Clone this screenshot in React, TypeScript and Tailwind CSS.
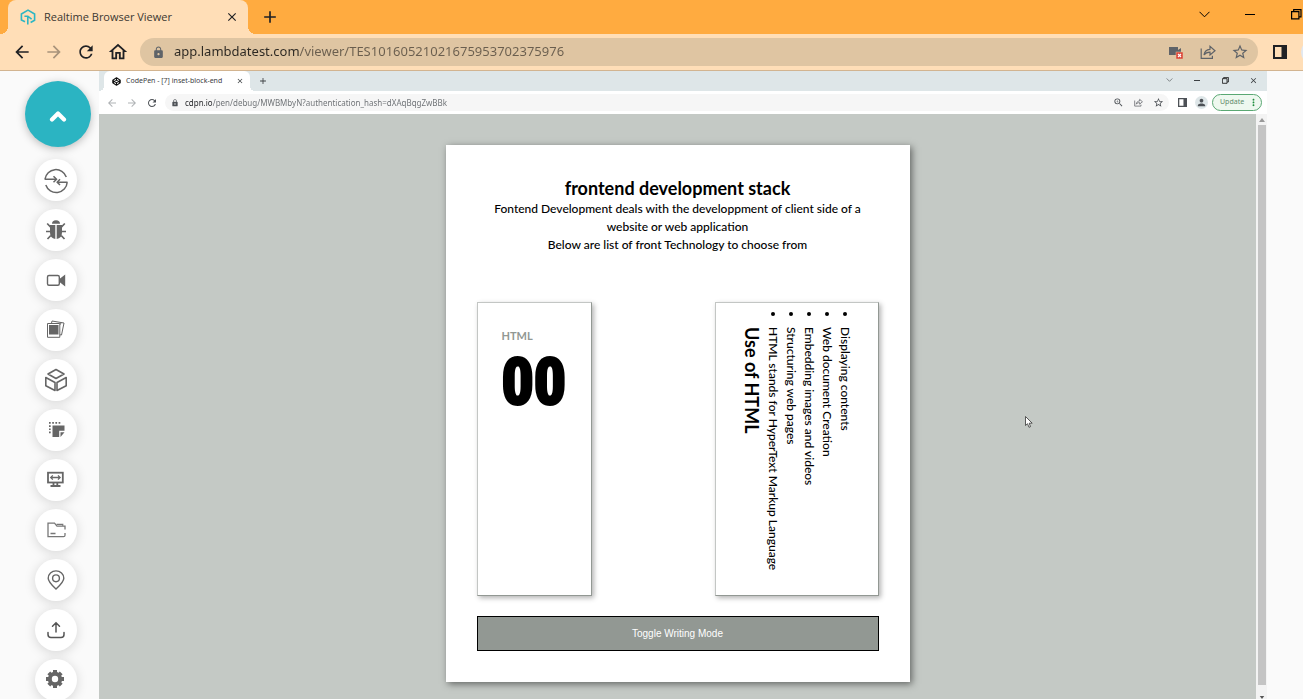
import type { ReactNode } from "react";
import {
  MdArrowBack,
  MdArrowForward,
  MdRefresh,
  MdOutlineHome,
  MdLock,
  MdStarBorder,
  MdZoomIn,
  MdPerson,
  MdMoreVert,
  MdClose,
  MdAdd,
} from "react-icons/md";

function LambdaLogo() {
  return (
    <svg viewBox="0 0 16 16" className="size-4 shrink-0" fill="none" stroke="#2db6c4" strokeWidth="1.6">
      <path d="M5 12.8 1.4 11V5L8 1.1 14.6 5v6.2L10.6 13.5" />
      <path d="M4.4 7.2h3.4l3.8 3M7.8 7.4v8" />
    </svg>
  );
}

function CodePenLogo() {
  return (
    <svg viewBox="0 0 24 24" className="size-[9px] shrink-0" fill="none" stroke="#111" strokeWidth="2.8" strokeLinejoin="round">
      <path d="M12 2 22 8.5v7L12 22 2 15.5v-7zM12 22v-6.5M22 8.5l-10 7-10-7M2 15.5l10-7 10 7M12 2v6.5" />
    </svg>
  );
}

function ShareIcon({ className }: { className: string }) {
  return (
    <svg viewBox="0 0 16 16" className={className} fill="none" stroke="currentColor" strokeWidth="1.2">
      <path d="M1.2 4.5v9.9h11.2v-2.6" />
      <path d="M4 11c.4-3.6 2.600-5.500 6-5.700V2.400L15 6.700l-5 4.200V8.200C7.400 8.200 5.400 9 4 11z" />
    </svg>
  );
}

function PanelIcon({ className }: { className: string }) {
  return (
    <svg viewBox="0 0 14 14" className={className}>
      <path fill="currentColor" fillRule="evenodd" d="M0 0h14v14H0zM2 2v10h6.500V2z" />
    </svg>
  );
}

function CameraBlockedIcon() {
  return (
    <svg viewBox="0 0 16 14" className="h-[14px] w-4">
      <path d="M1 2h9v3l3-2v7H1z" fill="#5f6368" />
      <rect x="8" y="7" width="7" height="7" fill="#db4437" stroke="#dfc5a2" strokeWidth=".5" />
      <path d="m10 9 3 3m0-3-3 3" stroke="#fff" strokeWidth="1.200" />
    </svg>
  );
}

function ChevronDown({ className }: { className: string }) {
  return (
    <svg viewBox="0 0 11 7" className={className} fill="none" stroke="currentColor">
      <path d="m.5.8 5 5 5-5" />
    </svg>
  );
}

function RestoreIcon({ className }: { className: string }) {
  return (
    <svg viewBox="0 0 11 11" className={className} fill="none" stroke="currentColor" strokeWidth="1.200">
      <path d="M.6 2.600h7.300v7.300H.6zM2.700 2.400V.6h7.300v7.300H8.200" />
    </svg>
  );
}

const tools: { label: string; icon: ReactNode }[] = [
  {
    label: "Switch",
    icon: (
      <g fill="none" stroke="#666" strokeWidth="1.5">
        <path d="M1 11.200A11 11 0 0 1 22.300 9M.5 11.200h11.500M23.500 14.200H13.500M23.200 14.200A11 11 0 0 1 1.800 17" />
        <path d="m9.500 8.200 3 3-3 3M16 11.300l-2.800 2.900 2.800 2.800" />
      </g>
    ),
  },
  {
    label: "Mark as bug",
    icon: (
      <g fill="#666" stroke="#666">
        <path d="M8 5.800a4 3.600 0 0 1 8 0z" stroke="none" />
        <path d="M6 7h5.300v14C7.800 20.500 6 18 6 14.500zM12.700 7H18v7.500c0 3.500-1.800 6-5.300 6.500z" stroke="none" />
        <path d="M6.500 9 3.200 5.500M17.500 9l3.300-3.500M6 13.500H2M18 13.500h4M6.800 17.500 3.500 21M17.200 17.500l3.300 3.500" strokeWidth="1.700" fill="none" />
      </g>
    ),
  },
  {
    label: "Record video",
    icon: (
      <g stroke="#666" strokeWidth="1.400">
        <rect x="3.500" y="7.500" width="11.800" height="9.800" rx="1.500" fill="none" />
        <path d="M16.500 11 20.500 8v9l-4-3z" fill="#666" />
      </g>
    ),
  },
  {
    label: "Gallery",
    icon: (
      <g stroke="#666" fill="none">
        <path d="M3.500 5.500h12.300v13.800H3.500z" />
        <rect x="5.500" y="7.500" width="8.500" height="8.500" fill="#666" />
        <path d="M7.500 5.200 8 3l12 2-2.500 12-1.500-.2M17 4.500l-.5 2" />
      </g>
    ),
  },
  {
    label: "Project",
    icon: (
      <g stroke="#666" strokeWidth="1.600" fill="none" strokeLinejoin="round">
        <path d="M12 1.500 20 6l-8 4.500L4 6z" />
        <path d="M1.800 9.500 11 14.500v8l-9.200-4.800zM22.200 9.500 13 14.500v8l9.200-4.800z" />
      </g>
    ),
  },
  {
    label: "Snapshot",
    icon: (
      <g fill="#666">
        <path d="M5 4h1.700v1.700H5zM8.200 4h1.700v1.700H8.200zM11.400 4h1.700v1.700h-1.700zM14.600 4h1.700v1.700h-1.700zM5 7.200h1.700v1.700H5zM5 10.400h1.700v1.700H5zM5 13.600h1.700v1.700H5z" />
        <path d="M8.500 7.500h12v5.300h-5.300V19H8.500zM16.500 14.200h4L16.500 19z" />
      </g>
    ),
  },
  {
    label: "Resolution",
    icon: (
      <g stroke="#666" fill="none">
        <rect x="4" y="4.700" width="14.800" height="9.800" strokeWidth="1.800" />
        <path d="M6.800 9.500H16M8.800 7.400 6.700 9.500l2.100 2.100M14 7.400l2.100 2.100-2.100 2.100" strokeWidth="1.300" />
        <path d="M9.500 15v2M13.300 15v2M6.500 18h10" strokeWidth="1.800" />
      </g>
    ),
  },
  {
    label: "Files",
    icon: (
      <g stroke="#777" strokeWidth="1.300" fill="none">
        <path d="M21 11.500V8.200H13L10.500 5.200H4v13.500h15.500a1.500 1.500 0 0 0 1.500-1.500V15" />
        <path d="M12.500 6.300h6.200v1.500M6.500 15.500h5" />
      </g>
    ),
  },
  {
    label: "Location",
    icon: (
      <g stroke="#666" strokeWidth="1.400" fill="none">
        <path d="M12 21C7.500 16.800 4.200 13.800 4.200 10.200a7.800 7.300 0 0 1 15.600 0C19.800 13.800 16.500 16.800 12 21z" />
        <circle cx="12" cy="10.300" r="3.400" />
      </g>
    ),
  },
  {
    label: "Upload",
    icon: (
      <g stroke="#555" strokeWidth="1.500" fill="none" strokeLinecap="round">
        <path d="M12 14V5M8.500 8.200 12 4.700l3.500 3.500M4 14.500v2a3 3 0 0 0 3 3h10a3 3 0 0 0 3-3v-2" />
      </g>
    ),
  },
  {
    label: "Settings",
    icon: (
      <g fill="none" stroke="#666">
        <circle cx="11" cy="11" r="5.200" strokeWidth="4" />
        <path d="M11 2v3M11 17v3M2 11h3M17 11h3M4.800 4.800l2 2M15.200 15.200l2 2M17.200 4.800l-2 2M6.800 15.200l-2 2" strokeWidth="4" />
      </g>
    ),
  },
];

const uses = [
  "HTML stands for HyperText Markup Language",
  "Structuring web pages",
  "Embedding images and videos",
  "Web document Creation",
  "Displaying contents",
];

function OuterChrome() {
  return (
    <header className="shrink-0 overflow-hidden font-['Noto_Sans',sans-serif]">
      <div className="flex h-[34px] items-center bg-[#ffab40] text-[#202124]">
        <span className="size-2 self-end bg-[radial-gradient(circle_at_top_left,transparent_8px,#ffdeb7_8px)]" />
        <div className="flex h-full w-60 items-center gap-2 rounded-t-lg bg-[#ffdeb7] px-3">
          <LambdaLogo />
          <span className="flex-1 whitespace-nowrap font-['Open_Sans',sans-serif] text-[11px] text-[#3c3832]">Realtime Browser Viewer</span>
          <button aria-label="Close tab" className="-mr-[3px]"><MdClose className="size-[14px]" /></button>
        </div>
        <span className="size-2 self-end bg-[radial-gradient(circle_at_top_right,transparent_8px,#ffdeb7_8px)]" />
        <button aria-label="New tab" className="ml-1"><MdAdd className="size-5" /></button>
        <div className="-mr-4 ml-auto flex h-full items-center pb-[6px] text-black">
          <button aria-label="Search tabs" className="flex w-[46px] justify-center"><ChevronDown className="h-[7px] w-[11px]" /></button>
          <button aria-label="Minimize" className="flex w-[46px] justify-center"><span className="h-px w-[10px] bg-black" /></button>
          <button aria-label="Restore" className="flex w-[46px] justify-center"><RestoreIcon className="size-[11px]" /></button>
        </div>
      </div>
      <div className="flex h-[37px] items-center border-b border-[#d2b490] bg-[#ffdeb7] pl-[6px] text-[#202124]">
        <button aria-label="Back" className="flex w-8 justify-center"><MdArrowBack className="size-5" /></button>
        <button aria-label="Forward" className="flex w-8 justify-center text-[#a8937b]"><MdArrowForward className="size-5" /></button>
        <button aria-label="Reload" className="flex w-8 justify-center"><MdRefresh className="size-5" /></button>
        <button aria-label="Home" className="flex w-8 justify-center"><MdOutlineHome className="size-[22px]" /></button>
        <div className="ml-[6px] flex h-7 flex-1 items-center rounded-full bg-[#dfc5a2] pr-[10px] pl-3 text-[#5f6368]">
          <MdLock className="size-[13px] shrink-0" />
          <input
            aria-label="Address"
            defaultValue="app.lambdatest.com/viewer/TES10160521021675953702375976"
            className="ml-[9px] min-w-0 flex-1 bg-[linear-gradient(to_right,#2c2822_125px,#6a5e4e_125px)] bg-clip-text text-[13px] text-transparent outline-none"
          />
          <button aria-label="Camera blocked" className="flex w-8 justify-center"><CameraBlockedIcon /></button>
          <button aria-label="Share" className="flex w-8 justify-center"><ShareIcon className="size-4" /></button>
          <button aria-label="Bookmark" className="-mr-2 flex w-8 justify-center"><MdStarBorder className="size-[18px]" /></button>
        </div>
        <button aria-label="Side panel" className="mr-[14px] ml-[15px]"><PanelIcon className="size-[14px]" /></button>
        <span className="-mr-[22px] size-6 rounded-full bg-slate-200" />
      </div>
    </header>
  );
}

function Toolbox() {
  return (
    <nav aria-label="Session tools" className="flex w-[99px] shrink-0 flex-col gap-2 bg-[#fafafa] pt-[10px] pl-[35px]">
      <button aria-label="Collapse" className="mb-1 -ml-[10px] flex size-[66px] shrink-0 items-center justify-center rounded-full bg-[#2bb4c2] shadow-[0_2px_8px_rgba(0,0,0,0.25)]">
        <svg viewBox="0 0 18 12" className="mt-1 h-3 w-[18px]" fill="none" stroke="#fff" strokeWidth="4.200" strokeLinecap="round" strokeLinejoin="round">
          <path d="M3 9.500 9 3.500l6 6" />
        </svg>
      </button>
      {tools.map((t) => (
        <button key={t.label} aria-label={t.label} className="flex size-[42px] shrink-0 items-center justify-center rounded-full bg-white shadow-[0_2px_12px_rgba(0,0,0,0.15)]">
          <svg viewBox="0 0 24 24" className="size-6 overflow-visible">{t.icon}</svg>
        </button>
      ))}
    </nav>
  );
}

function InnerChrome() {
  return (
    <div className="shrink-0 font-['Noto_Sans',sans-serif] text-[#3c4043]">
      <div className="flex h-5 items-center bg-[#dee6e8]">
        <span className="size-[5px] self-end bg-[radial-gradient(circle_at_top_left,transparent_5px,#fff_5px)]" />
        <div className="flex h-full w-[146px] items-center gap-[5px] rounded-t-md bg-white pr-[6px] pl-2">
          <CodePenLogo />
          <span className="flex-1 whitespace-nowrap text-[7px]">CodePen - [7] inset-block-end</span>
          <button aria-label="Close CodePen tab"><MdClose className="size-2" /></button>
        </div>
        <span className="size-[5px] self-end bg-[radial-gradient(circle_at_top_right,transparent_5px,#fff_5px)]" />
        <button aria-label="New CodePen tab" className="ml-[3px]"><MdAdd className="size-[10px]" /></button>
        <div className="ml-auto flex items-center pb-[2px]">
          <button aria-label="Search inner tabs" className="flex w-7 justify-center"><ChevronDown className="h-1 w-[7px]" /></button>
          <button aria-label="Minimize inner window" className="flex w-7 justify-center"><span className="h-px w-[6px] bg-current" /></button>
          <button aria-label="Restore inner window" className="flex w-7 justify-center text-black"><RestoreIcon className="size-[7px]" /></button>
          <button aria-label="Close inner window" className="flex w-7 justify-center"><MdClose className="size-[9px]" /></button>
        </div>
      </div>
      <div className="flex h-[23px] items-center bg-white pr-[5px] pl-[3px] text-[#4d5156]">
        <button aria-label="Inner back" className="flex w-5 justify-center text-[#b0b3b6]"><MdArrowBack className="size-3" /></button>
        <button aria-label="Inner forward" className="flex w-5 justify-center text-[#b0b3b6]"><MdArrowForward className="size-3" /></button>
        <button aria-label="Inner reload" className="flex w-5 justify-center"><MdRefresh className="size-3" /></button>
        <div className="ml-[3px] flex h-[17px] flex-1 items-center rounded-full bg-[#f6f6f6] pr-[1px] pl-[6px]">
          <MdLock className="size-2 shrink-0" />
          <input
            aria-label="Inner address"
            defaultValue="cdpn.io/pen/debug/MWBMbyN?authentication_hash=dXAqBqgZwBBk"
            className="ml-[6px] min-w-0 flex-1 bg-[linear-gradient(to_right,#202124_27px,#6a6e72_27px)] bg-clip-text text-[8px] text-transparent outline-none"
          />
          <button aria-label="Zoom" className="flex w-5 justify-center"><MdZoomIn className="size-[11px]" /></button>
          <button aria-label="Inner share" className="flex w-5 justify-center"><ShareIcon className="size-[9px]" /></button>
          <button aria-label="Inner bookmark" className="flex w-5 justify-center"><MdStarBorder className="size-[11px]" /></button>
        </div>
        <button aria-label="Inner side panel" className="ml-[9px]"><PanelIcon className="size-[9px]" /></button>
        <button aria-label="Profile" className="ml-2 flex size-[13px] items-center justify-center rounded-full bg-[#dee6e8]"><MdPerson className="size-[11px]" /></button>
        <button className="ml-1 flex h-[17px] w-[50px] items-center justify-between rounded-full border border-[#5aa873] bg-[#eef8ef] pr-[2px] pl-[7px] text-[#5e8a6a]">
          <span className="text-[7px]">Update</span>
          <MdMoreVert className="size-[11px] text-[#1e8e3e]" />
        </button>
      </div>
    </div>
  );
}

const panel = "border border-t-[#c3c6c4] border-r-[#929893] border-b-[#929893] border-l-[#c3c6c4] bg-white shadow-[2px_2px_5px_rgba(0,0,0,0.3)]";

function StackCard() {
  return (
    <article className="w-[464px] bg-white p-[31px] font-[Lato,sans-serif] text-black shadow-[2px_2px_7px_rgba(0,0,0,0.5)]">
      <header className="mb-12 text-center text-xs leading-[18px] font-medium">
        <h1 className="text-lg leading-6 font-bold">frontend development stack</h1>
        <p>Fontend Development deals with the developpment of client side of a website or web application</p>
        <p>Below are list of front Technology to choose from</p>
      </header>
      <div className="flex h-[294px] justify-between">
        <section className={`w-[115px] px-6 pt-6 ${panel}`}>
          <h2 className="text-[11px] leading-[18px] font-bold text-[#929893]">HTML</h2>
          <p className="font-['Liberation_Sans_Narrow','Roboto_Condensed',sans-serif] text-[64px] leading-[76px] font-bold [-webkit-text-stroke:3px_#000]">00</p>
        </section>
        <section className={`p-6 text-xs leading-[18px] font-medium [writing-mode:vertical-lr] ${panel}`}>
          <h2 className="text-lg leading-6 font-bold">Use of HTML</h2>
          <ul className="list-disc">
            {uses.map((u) => (
              <li key={u}>{u}</li>
            ))}
          </ul>
        </section>
      </div>
      <button className="mt-5 h-[35px] w-full border border-black bg-[#929893] font-['Liberation_Sans',Arial,sans-serif] text-[10px] text-white">
        Toggle Writing Mode
      </button>
    </article>
  );
}

function Scrollbar() {
  return (
    <div className="flex w-[11px] shrink-0 flex-col items-center gap-[3px] bg-[#f3f3f3] pt-1 text-[#777]">
      <svg viewBox="0 0 6 4" className="h-1 w-[6px]" fill="#999"><path d="M0 4 3 0l3 4z" /></svg>
      <div className="w-2 flex-1 bg-[#c4c4c4]" />
      <svg viewBox="0 0 6 4" className="mt-2 h-[3px] w-[6px]" fill="#555"><path d="m0 0 3 4 3-4z" /></svg>
    </div>
  );
}

export default function App() {
  return (
    <div className="flex h-screen flex-col overflow-hidden bg-[#fafafa]">
      <OuterChrome />
      <div className="flex min-h-0 flex-1">
        <Toolbox />
        <main className="relative mr-9 flex min-w-0 flex-1 flex-col">
          <InnerChrome />
          <div className="flex min-h-0 flex-1">
            <div className="flex min-w-0 flex-1 items-start justify-center overflow-hidden bg-[#c4c9c5] pt-[31px]">
              <StackCard />
            </div>
            <Scrollbar />
          </div>
          <svg viewBox="0 0 8 12" className="absolute top-[345px] left-[926px] h-3 w-2" fill="#fff" stroke="#333" strokeWidth=".8">
            <path d="M.5.5v9l2-1.800L4 11.300l1.500-.7L4.200 7.200h3z" />
          </svg>
        </main>
      </div>
    </div>
  );
}
